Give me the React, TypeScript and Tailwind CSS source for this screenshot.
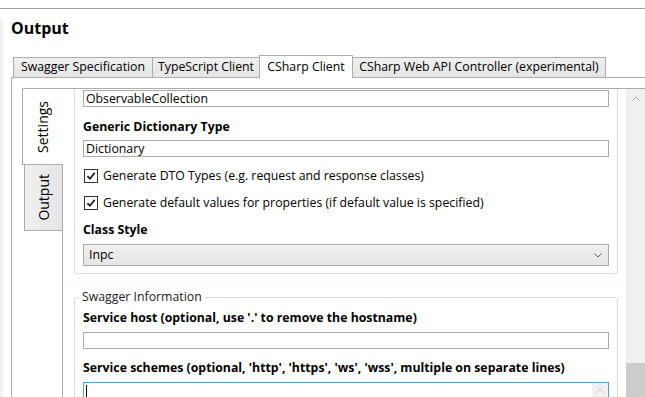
import React from 'react';

const tabs = [
  { label: 'Swagger Specification', width: 'w-[140px]', active: false },
  { label: 'TypeScript Client', width: 'w-[108px]', active: false },
  { label: 'CSharp Client', width: 'w-[94px]', active: true },
  { label: 'CSharp Web API Controller (experimental)', width: 'w-[254px]', active: false },
];

const TextBox = ({ value = '' }: { value?: string }) => (
  <div className="h-[17px] border border-[#acacac] bg-white px-[2px] text-[12.3px] leading-[15px] whitespace-nowrap">
    {value}
  </div>
);

const Label = ({ children, className = '' }: { children: React.ReactNode; className?: string }) => (
  <div className={`h-[18px] text-[12.3px] font-bold leading-[18px] whitespace-nowrap ${className}`}>{children}</div>
);

const CheckRow = ({ text, className = '' }: { text: string; className?: string }) => (
  <div className={`flex h-[18px] items-center ${className}`}>
    <span className="ml-px flex h-[14px] w-[14px] items-center justify-center border border-[#333333] bg-white">
      <svg width="10" height="10" viewBox="0 0 10 10">
        <path d="M1.4 5.1 L3.9 7.7 L8.7 1.9" fill="none" stroke="#202020" strokeWidth="1.8" />
      </svg>
    </span>
    <span className="ml-[5px] text-[12.3px] leading-[18px] whitespace-nowrap">{text}</span>
  </div>
);

const ChevronUp = ({ color }: { color: string }) => (
  <svg width="8" height="5" viewBox="0 0 8 5">
    <path d="M0.5 4.5 L4 1 L7.5 4.5" fill="none" stroke={color} strokeWidth="1" />
  </svg>
);

export default function App() {
  return (
    <div className="h-[397px] w-[645px] overflow-hidden bg-white font-['Open_Sans',sans-serif] text-black">
      <div className="h-[8px]" />
      <div className="flex h-[389px] border-t border-[#a0a0a0]">
        {/* window edge */}
        <div className="mt-[10px] w-[3px] bg-[#f0f0f0]" />

        <div className="flex min-w-0 flex-1 flex-col pl-[8px]">
          <h1 className="mt-[7px] h-[24px] text-[16px] font-bold leading-[24px]">Output</h1>

          {/* horizontal tabs */}
          <div className="mt-[15px] flex h-[22px] items-end pl-[2px]">
            {tabs.map((tab, i) =>
              tab.active ? (
                <div
                  key={tab.label}
                  className={`relative z-10 -mb-px -ml-px flex h-[23px] items-center justify-center border-x border-t border-[#acacac] bg-white text-[12.3px] whitespace-nowrap ${tab.width}`}
                >
                  {tab.label}
                </div>
              ) : (
                <div
                  key={tab.label}
                  className={`flex h-[20px] items-center justify-center border-x border-t border-[#acacac] bg-linear-to-b from-[#f0f0f0] to-[#e5e5e5] text-[12.3px] whitespace-nowrap ${tab.width} ${i > 0 ? '-ml-px' : ''}`}
                >
                  {tab.label}
                </div>
              )
            )}
          </div>

          <div className="flex min-h-0 flex-1 border-l border-t border-[#acacac] pl-[10px] pt-[10px]">
            {/* vertical tabs */}
            <div className="flex w-[40px] shrink-0 flex-col">
              <div className="relative z-10 -mr-px flex h-[77px] items-center justify-center border-y border-l border-[#acacac] bg-white">
                <span className="rotate-180 text-[14px] leading-[16px] [writing-mode:vertical-rl]">Settings</span>
              </div>
              <div className="-mt-px ml-[2px] flex h-[67px] items-center justify-center border-y border-l border-[#acacac] bg-linear-to-r from-[#f0f0f0] to-[#e5e5e5]">
                <span className="rotate-180 text-[14px] leading-[16px] [writing-mode:vertical-rl]">Output</span>
              </div>
            </div>

            <div className="flex min-w-0 flex-1 border-l border-t border-[#acacac]">
              <div className="min-w-0 flex-1 overflow-hidden pl-[11px] pr-[8px]">
                {/* settings group (scrolled) */}
                <div className="rounded-b-[3px] border-x border-b border-[#d5dfe5] px-[8px] pt-px pb-[7px]">
                  <TextBox value="ObservableCollection" />
                  <Label className="mt-[11px]">Generic Dictionary Type</Label>
                  <div className="mt-[4px]">
                    <TextBox value="Dictionary" />
                  </div>
                  <CheckRow className="mt-[10px]" text="Generate DTO Types (e.g. request and response classes)" />
                  <CheckRow className="mt-[9px]" text="Generate default values for properties (if default value is specified)" />
                  <Label className="mt-[9px]">Class Style</Label>
                  <div className="mt-[5px] flex h-[22px] items-center justify-between border border-[#acacac] bg-linear-to-b from-[#f0f0f0] to-[#e5e5e5] pl-[5px] pr-[6px] text-[12.3px]">
                    <span>Inpc</span>
                    <svg width="8" height="5" viewBox="0 0 8 5">
                      <path d="M0.5 0.5 L4 4 L7.5 0.5" fill="none" stroke="#606060" strokeWidth="1" />
                    </svg>
                  </div>
                </div>

                {/* swagger information */}
                <fieldset className="mt-[15px] rounded-[3px] border border-[#d5dfe5] pl-[4px] pr-[8px] pt-[4px]">
                  <legend className="px-[3px] text-[12.3px] leading-[16px] text-[#222222]">Swagger Information</legend>
                  <div className="pl-[4px]">
                    <Label>Service host (optional, use '.' to remove the hostname)</Label>
                    <div className="mt-[5px]">
                      <TextBox />
                    </div>
                    <Label className="mt-[10px]">
                      Service schemes (optional, 'http', 'https', 'ws', 'wss', multiple on separate lines)
                    </Label>
                    <div className="mt-[5px] flex h-[30px] border border-[#569de5] bg-white">
                      <div className="ml-[2px] mt-[2px] h-[14px] w-px bg-black" />
                      <div className="flex-1" />
                      <div className="flex h-[15px] w-[16px] items-center justify-center bg-[#f0f0f0]">
                        <ChevronUp color="#c2c2c2" />
                      </div>
                    </div>
                  </div>
                </fieldset>
              </div>

              {/* scrollbar */}
              <div className="flex w-[19px] shrink-0 flex-col bg-[#f0f0f0]">
                <div className="flex h-[16px] items-center justify-center pt-[2px]">
                  <ChevronUp color="#a6a6a6" />
                </div>
                <div className="flex-1" />
                <div className="h-[34px] bg-[#cdcdcd]" />
              </div>
            </div>
          </div>
        </div>
      </div>
    </div>
  );
}
